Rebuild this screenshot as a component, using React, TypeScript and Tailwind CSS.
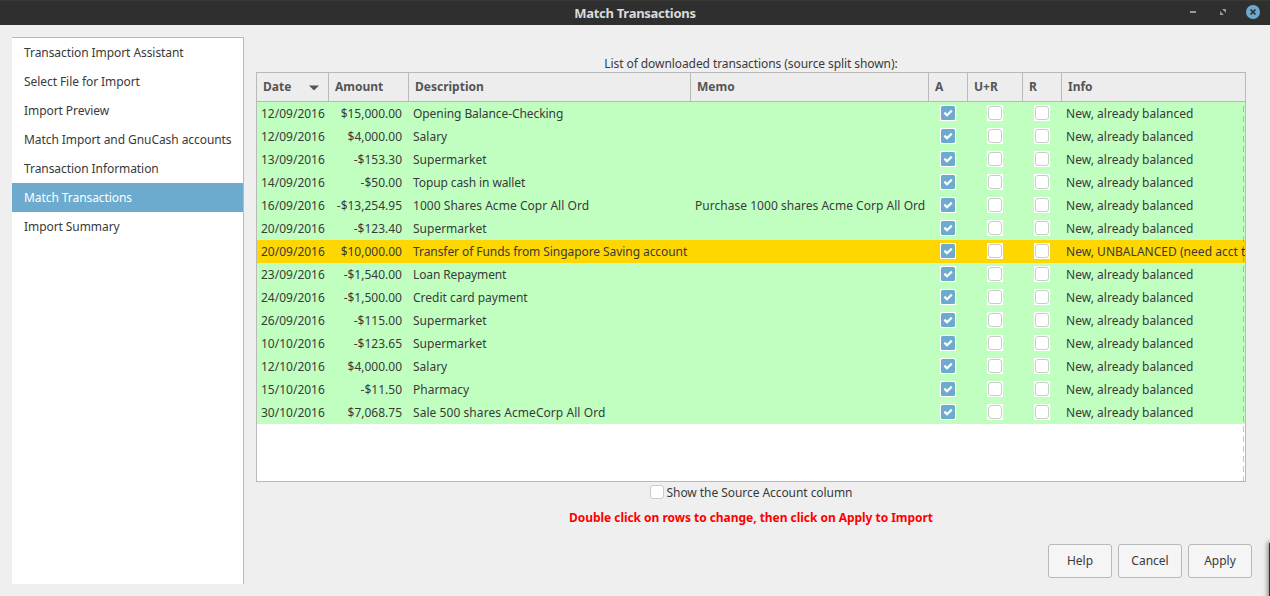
import React from "react";

const steps = [
  "Transaction Import Assistant",
  "Select File for Import",
  "Import Preview",
  "Match Import and GnuCash accounts",
  "Transaction Information",
  "Match Transactions",
  "Import Summary",
];

type Row = { date: string; amount: string; description: string; memo?: string; unbalanced?: boolean; spacing?: string };

const rows: Row[] = [
  { date: "12/09/2016", amount: "$15,000.00", description: "Opening Balance-Checking", spacing: "tracking-[-0.07px]" },
  { date: "12/09/2016", amount: "$4,000.00", description: "Salary" },
  { date: "13/09/2016", amount: "-$153.30", description: "Supermarket" },
  { date: "14/09/2016", amount: "-$50.00", description: "Topup cash in wallet", spacing: "tracking-[-0.1px]" },
  { date: "16/09/2016", amount: "-$13,254.95", description: "1000 Shares Acme Copr All Ord", memo: "Purchase 1000 shares Acme Corp All Ord", spacing: "tracking-[0.04px]" },
  { date: "20/09/2016", amount: "-$123.40", description: "Supermarket" },
  { date: "20/09/2016", amount: "$10,000.00", description: "Transfer of Funds from Singapore Saving account", unbalanced: true, spacing: "tracking-[-0.07px]" },
  { date: "23/09/2016", amount: "-$1,540.00", description: "Loan Repayment", spacing: "tracking-[-0.12px]" },
  { date: "24/09/2016", amount: "-$1,500.00", description: "Credit card payment" },
  { date: "26/09/2016", amount: "-$115.00", description: "Supermarket" },
  { date: "10/10/2016", amount: "-$123.65", description: "Supermarket" },
  { date: "12/10/2016", amount: "$4,000.00", description: "Salary" },
  { date: "15/10/2016", amount: "-$11.50", description: "Pharmacy" },
  { date: "30/10/2016", amount: "$7,068.75", description: "Sale 500 shares AcmeCorp All Ord", spacing: "tracking-[0.06px]" },
];

const columns = "grid grid-cols-[72px_80px_282px_238px_39px_55px_39px_183px]";
const headers = ["Date", "Amount", "Description", "Memo", "A", "U+R", "R", "Info"];

function CheckBox({ checked = false }: { checked?: boolean }) {
  return (
    <span className="mb-px flex size-4 items-center justify-center bg-white">
      {checked ? (
        <svg width="14" height="14" viewBox="0 0 14 14">
          <rect width="14" height="14" rx="1.5" fill="#6caace" />
          <path d="M3.4 6.6 6 9.2 10.8 4.6" fill="none" stroke="#fff" strokeWidth="2.2" />
        </svg>
      ) : (
        <span className="size-3.5 rounded-[3px] border border-[#cbcbcb] bg-white" />
      )}
    </span>
  );
}

function TitleBar() {
  return (
    <header className="grid h-[25px] shrink-0 grid-cols-[1fr_auto_1fr] items-center border-t border-[#383838] bg-[#2f2f2f]">
      <span />
      <h1 className="text-[13px] leading-6 font-bold tracking-[-0.28px] text-[#dadada]">Match Transactions</h1>
      <div className="flex items-center justify-end pr-2.5">
        <svg width="70" height="24" viewBox="0 0 70 24">
          <rect x="0" y="10" width="6" height="2" fill="#999" />
          <path d="M32 8h4v4zM30 10v4h4z" fill="#999" />
          <circle cx="63" cy="11" r="7" fill="#6caace" />
          <path d="M60.5 8.5l5 5M65.5 8.5l-5 5" stroke="#2f2f2f" strokeWidth="1.7" />
        </svg>
      </div>
    </header>
  );
}

function Sidebar() {
  return (
    <nav className="h-[547px] w-[232px] shrink-0 border-t border-r border-[#b9b9b9] bg-white tracking-[-0.07px]">
      {steps.map((step) => (
        <div
          key={step}
          className={
            step === "Match Transactions"
              ? "h-[29px] bg-[#6caace] pl-3 leading-[29px] whitespace-nowrap text-white"
              : "h-[29px] pl-3 leading-[29px] whitespace-nowrap"
          }
        >
          {step}
        </div>
      ))}
    </nav>
  );
}

function TransactionTable() {
  return (
    <div className="relative h-[410px] w-[990px] overflow-hidden border border-[#b9b9b9] bg-white">
      <div className={`${columns} h-[29px] border-b border-[#b9b9b9] bg-[#ededed] font-bold text-[#555]`}>
        {headers.map((header) => (
          <div key={header} className="flex items-center justify-between border-r border-[#b9b9b9] pr-[9px] pl-1.5 last:border-r-0">
            {header}
            {header === "Date" && (
              <svg width="10" height="6" viewBox="0 0 10 6" className="mt-px">
                <path d="M0 0.5h10L5 5.5z" fill="#555" />
              </svg>
            )}
          </div>
        ))}
      </div>
      {rows.map((row) => (
        <div
          key={row.date + row.amount}
          className={`${columns} h-[23px] items-center leading-[23px] whitespace-nowrap ${row.unbalanced ? "bg-[#ffd700]" : "bg-[#c1ffc1]"}`}
        >
          <span className="pl-1">{row.date}</span>
          <span className="pr-[7px] text-right">{row.amount}</span>
          <span className={`pl-1 ${row.spacing ?? ""}`}>{row.description}</span>
          <span className="pl-1 tracking-[0.03px]">{row.memo}</span>
          <span className="pl-[11px]"><CheckBox checked /></span>
          <span className="pl-[19px]"><CheckBox /></span>
          <span className="pl-[11px]"><CheckBox /></span>
          <span className="overflow-hidden pl-1 tracking-[0.03px]">{row.unbalanced ? "New, UNBALANCED (need acct transfer)" : "New, already balanced"}</span>
        </div>
      ))}
      <div className="absolute top-[29px] right-[1px] bottom-0 w-px bg-[repeating-linear-gradient(to_bottom,transparent_0_4px,rgba(0,0,0,0.22)_4px_10px)]" />
    </div>
  );
}

function Button({ label }: { label: string }) {
  return (
    <button className="h-[34px] w-16 rounded-[3px] border border-[#b9b9b9] bg-[#f5f5f5]">{label}</button>
  );
}

export default function App() {
  return (
    <div className="relative flex h-[596px] w-[1270px] flex-col overflow-hidden bg-[#efefef] font-['Noto_Sans',sans-serif] text-[12px] text-[#3a3a3a]">
      <TitleBar />
      <div className="flex gap-3 pt-3 pl-3">
        <Sidebar />
        <main className="flex w-[996px] flex-col">
          <p className="mt-[18px] h-[17px] w-[990px] text-center leading-[18px] tracking-[-0.08px]">List of downloaded transactions (source split shown):</p>
          <TransactionTable />
          <label className="flex h-[21px] w-[990px] items-center justify-center gap-[3px] tracking-[-0.06px]">
            <span className="mb-px size-3.5 rounded-[3px] border border-[#cbcbcb] bg-white" />
            Show the Source Account column
          </label>
          <p className="mt-1.5 w-[990px] text-center leading-[18px] font-bold tracking-[-0.04px] text-[#ff0000]">
            Double click on rows to change, then click on Apply to Import
          </p>
          <div className="mt-[17px] flex justify-end gap-1.5">
            <Button label="Help" />
            <Button label="Cancel" />
            <Button label="Apply" />
          </div>
        </main>
      </div>
      <div className="absolute top-[543px] left-[1269px] h-[60px] w-5 bg-[#333] shadow-[0_0_5px_1px_rgba(0,0,0,0.5)]" />
    </div>
  );
}
